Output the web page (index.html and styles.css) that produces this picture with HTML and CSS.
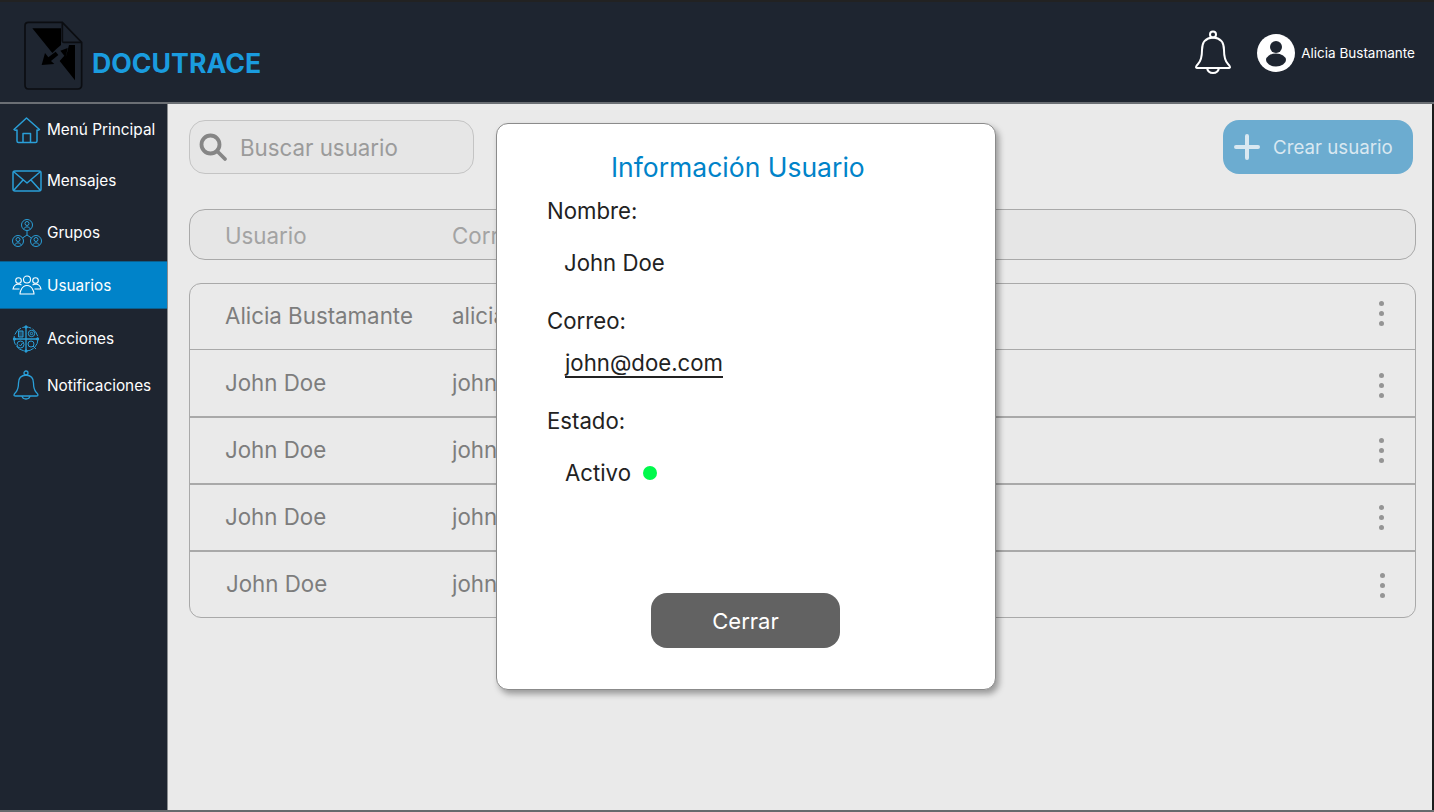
FILE: index.html
```html
<!DOCTYPE html>
<html lang="en">
<head>
  <meta charset="UTF-8">
  <meta name="viewport" content="width=device-width, initial-scale=1.0">
  <title>Docutrace - Usuarios</title>
  <link rel="stylesheet" href="styles.css">
</head>
<body>
  <div class="app">
    <header class="topbar">
      <div class="brand">
        <svg class="brand-icon" width="60" height="70" viewBox="15 8 180 210">
          <path d="M28 12H130L188 72V200Q188 212 176 212H28Q18 212 18 200V22Q18 12 28 12Z" fill="none" stroke="#0b0d11" stroke-width="5"/>
          <path d="M130 14V68Q130 72 134 72H186" fill="none" stroke="#0b0d11" stroke-width="5"/>
          <path d="M40 30H126V80L112 92L100 104Z" fill="#000"/>
          <path d="M68 140L78 104L88 117L110 100L118 110L96 128L106 137Z" fill="#000"/>
          <path d="M168 80V186L122 128L136 112L124 97L146 89L140 118L150 80Z" fill="#000"/>
        </svg>
        <span class="brand-name">DOCUTRACE</span>
      </div>
      <div class="topbar-right">
        <svg class="top-bell" width="38" height="46" viewBox="0 0 38 46" fill="none" stroke="#fff" stroke-width="2" stroke-linejoin="round">
          <circle cx="19" cy="4.5" r="3"/>
          <path d="M2 37Q2 36 4 34Q8 30 8 20Q8 8 19 7.5Q30 8 30 20Q30 30 34 34Q36 36 36 37Q36 38 34 38H4Q2 38 2 37Z"/>
          <path d="M13 38Q14 43 19 43Q24 43 25 38"/>
        </svg>
        <svg width="38" height="38" viewBox="0 0 38 38">
          <circle cx="19" cy="19" r="19" fill="#fff"/>
          <circle cx="19" cy="13" r="6" fill="#1e2530"/>
          <ellipse cx="19" cy="26" rx="10" ry="6.5" fill="#1e2530"/>
        </svg>
        <span class="top-user">Alicia Bustamante</span>
      </div>
    </header>

    <div class="body-row">
      <nav class="sidebar">
        <a class="nav-item nav-home">
          <svg class="nav-icon" width="30" height="28" viewBox="0 0 30 28" fill="none" stroke="#2a9fd8" stroke-width="1.5" stroke-linejoin="round">
            <path d="M2 13.5L14.5 2L27.5 13.5Q27 14.5 25 14V25Q25 26.5 23.5 26.5H6.5Q5 26.5 5 25V14Q3 14.5 2 13.5Z"/>
            <path d="M11 26V17.5H18.5V26"/>
          </svg>
          Menú Principal
        </a>
        <a class="nav-item nav-mail">
          <svg class="nav-icon" width="30" height="22" viewBox="0 0 30 22" fill="none" stroke="#2a9fd8" stroke-width="1.5" stroke-linejoin="round">
            <rect x="1" y="1" width="28" height="20" rx="2"/>
            <path d="M2 2L15 13L28 2M2 20L11 10M28 20L19 10"/>
          </svg>
          Mensajes
        </a>
        <a class="nav-item nav-groups">
          <svg class="nav-icon" width="30" height="30" viewBox="0 0 30 30" fill="none" stroke="#2a9fd8" stroke-width="1">
            <circle cx="15" cy="7" r="5.5"/>
            <circle cx="15" cy="5.5" r="2"/>
            <path d="M11.5 11Q15 6.5 18.5 11"/>
            <circle cx="6" cy="23" r="5.5"/>
            <circle cx="6" cy="21.5" r="2"/>
            <path d="M2.5 27Q6 22.5 9.500 27"/>
            <circle cx="24" cy="23" r="5.5"/>
            <circle cx="24" cy="21.5" r="2"/>
            <path d="M20.5 27Q24 22.5 27.5 27"/>
            <path d="M15 12.5V17L10.500 20M15 17L19.500 20"/>
          </svg>
          Grupos
        </a>
        <a class="nav-item nav-users">
          <svg class="nav-icon" width="30" height="20" viewBox="0 0 30 20" fill="none" stroke="#fff" stroke-width="1.1">
            <circle cx="15" cy="4.500" r="3.500"/>
            <path d="M8 19Q8 17 9 15Q11 10.500 15 10.500Q19 10.500 21 15Q22 17 22 19Z"/>
            <circle cx="6.500" cy="5.500" r="2.800"/>
            <path d="M9.500 10Q7.500 9 6 9Q2 9.500 1 14H7.500"/>
            <circle cx="23.500" cy="5.500" r="2.800"/>
            <path d="M20.500 10Q22.500 9 24 9Q28 9.500 29 14H22.500"/>
          </svg>
          Usuarios
        </a>
        <a class="nav-item nav-actions">
          <svg class="nav-icon" width="28" height="28" viewBox="0 0 28 28" fill="none" stroke="#2a9fd8" stroke-width="1">
            <circle cx="14" cy="14" r="12" stroke-dasharray="9 1.500"/>
            <path d="M14 2V26M2 14H26" stroke-width="1.300"/>
            <path d="M6.500 6H11V12H6.500Z" fill="#2a9fd8" fill-opacity=".35"/>
            <circle cx="19.500" cy="8.500" r="3.200"/>
            <circle cx="19.500" cy="8.500" r="1.200"/>
            <circle cx="8.500" cy="19.500" r="3.500"/>
            <path d="M7 19.500L8.500 21L10.500 18"/>
            <circle cx="19" cy="19" r="3"/>
            <path d="M21 21L24 24"/>
            <circle cx="2.500" cy="14" r="1.200" fill="#2a9fd8"/>
            <circle cx="25.500" cy="14" r="1.200" fill="#2a9fd8"/>
            <circle cx="14" cy="2" r="1.200" fill="#2a9fd8"/>
            <circle cx="14" cy="26" r="1.200" fill="#2a9fd8"/>
          </svg>
          Acciones
        </a>
        <a class="nav-item nav-alerts">
          <svg class="nav-icon" width="26" height="31" viewBox="0 0 26 31" fill="none" stroke="#2a9fd8" stroke-width="1.300" stroke-linejoin="round">
            <circle cx="13" cy="3" r="2"/>
            <path d="M1 25Q1 24 3 22Q5.500 19 5.500 13Q5.500 5.500 13 5Q20.500 5.500 20.500 13Q20.500 19 23 22Q25 24 25 25Q25 26 23.500 26H2.500Q1 26 1 25Z"/>
            <path d="M9 26Q9.500 29 13 29Q16.500 29 17 26"/>
          </svg>
          Notificaciones
        </a>
      </nav>

      <main class="content">
        <div class="toolbar">
          <div class="search">
            <svg width="30" height="30" viewBox="0 0 30 30" fill="none" stroke="#868686" stroke-width="3.800">
              <circle cx="12.500" cy="12.500" r="9"/>
              <path d="M19 19L27 27" stroke-linecap="round"/>
            </svg>
            <span>Buscar usuario</span>
          </div>
          <button class="create-btn">
            <svg width="26" height="26" viewBox="0 0 26 26" stroke="#d9e8f1" stroke-width="4" stroke-linecap="round">
              <path d="M13 2V24M2 13H24"/>
            </svg>
            Crear usuario
          </button>
        </div>

        <div class="table-head">
          <span class="col-user">Usuario</span>
          <span class="col-mail">Correo</span>
        </div>

        <div class="table-body">
          <div class="row row-first">
            <span class="col-user">Alicia Bustamante</span>
            <span class="col-mail">alicia@docutrace.com</span>
            <span class="dots"><i></i><i></i><i></i></span>
          </div>
          <div class="row row-thin">
            <span class="col-user">John Doe</span>
            <span class="col-mail">john@doe.com</span>
            <span class="dots"><i></i><i></i><i></i></span>
          </div>
          <div class="row">
            <span class="col-user">John Doe</span>
            <span class="col-mail">john@doe.com</span>
            <span class="dots"><i></i><i></i><i></i></span>
          </div>
          <div class="row">
            <span class="col-user">John Doe</span>
            <span class="col-mail">john@doe.com</span>
            <span class="dots"><i></i><i></i><i></i></span>
          </div>
          <div class="row row-last">
            <span class="col-user">John Doe</span>
            <span class="col-mail">john@doe.com</span>
            <span class="dots"><i></i><i></i><i></i></span>
          </div>
        </div>
      </main>
    </div>

    <section class="modal">
      <h2 class="modal-title">Información Usuario</h2>
      <div class="modal-label">Nombre:</div>
      <div class="modal-value value-name">John Doe</div>
      <div class="modal-label label-mail">Correo:</div>
      <div class="modal-value value-mail"><span>john@doe.com</span></div>
      <div class="modal-label label-state">Estado:</div>
      <div class="modal-value value-state">Activo <i class="status-dot"></i></div>
      <button class="close-btn">Cerrar</button>
    </section>
  </div>
</body>
</html>
```

FILE: styles.css
```css
* {
  box-sizing: border-box;
}
html, body {
  margin: 0;
  height: 100%;
  overflow: hidden;
}
body {
  font-family: Inter, "Liberation Sans", sans-serif;
  background-color: #1e2530;
}
.app {
  position: relative;
  display: flex;
  flex-direction: column;
  width: 1434px;
  height: 812px;
  border-bottom: 2px solid #66696c;
}

/* top bar */
.topbar {
  display: flex;
  flex: none;
  align-items: center;
  justify-content: space-between;
  height: 104px;
  padding: 2px 19px 0 24px;
  background-color: #1e2530;
  border-top: 2px solid #222;
  border-bottom: 2px solid #6b6f74;
}
.brand {
  display: flex;
  align-items: center;
  gap: 8px;
  margin-top: 6px;
}
.brand-name {
  margin-top: 14px;
  color: #1a9cdf;
  font-size: 26.700px;
  font-weight: 700;
  line-height: 32px;
}
.topbar-right {
  display: flex;
  align-items: center;
  color: #fff;
}
.top-bell {
  margin-right: 25px;
}
.top-user {
  margin-left: 6px;
  font-size: 13.500px;
}

/* sidebar */
.body-row {
  display: flex;
  flex: 1;
  min-height: 0;
}
.sidebar {
  width: 168px;
  padding-top: 2px;
  background-color: #1e2530;
  border-right: 1px solid #8a8d90;
}
.nav-item {
  display: flex;
  align-items: center;
  height: 47px;
  padding-left: 12px;
  color: #fff;
  font-size: 15.350px;
  white-space: nowrap;
}
.nav-icon {
  flex: none;
  margin-right: 5px;
}
.nav-mail {
  margin-top: 4px;
}
.nav-groups {
  margin-top: 5px;
}
.nav-users {
  height: 48px;
  margin-top: 5px;
  background-color: #0083c9;
  border-top: 1px solid #0b5f8d;
  border-bottom: 1px solid #0b5f8d;
}
.nav-actions {
  margin-top: 6px;
}
.nav-actions .nav-icon {
  margin-right: 7px;
}
.nav-alerts .nav-icon {
  margin: 0 8px 0 1px;
}

/* main area */
.content {
  flex: 1;
  padding: 16px 16px 0 21px;
  background-color: #eaeaea;
  border-right: 2px solid #1c1c1c;
  font-size: 22.300px;
}
.toolbar {
  display: flex;
  justify-content: space-between;
  height: 54px;
}
.search {
  display: flex;
  align-items: center;
  gap: 12px;
  width: 285px;
  padding-left: 8px;
  background-color: #e6e6e6;
  border: 1px solid #c4c4c4;
  border-radius: 16px;
  color: #9b9b9b;
}
.create-btn {
  display: flex;
  align-items: center;
  gap: 13px;
  width: 190px;
  margin-right: 3px;
  padding: 0 0 0 11px;
  background-color: #6cacd0;
  border: none;
  border-radius: 16px;
  color: #d9e8f1;
  font-family: inherit;
  font-size: 18.700px;
}
.table-head {
  display: flex;
  align-items: center;
  height: 51px;
  margin-top: 35px;
  padding: 1px 0 0 35px;
  background-color: #e6e6e6;
  border: 1px solid #a9a9a9;
  border-radius: 16px;
  color: #a3a3a3;
}
.table-body {
  margin-top: 23px;
  border: 1px solid #a9a9a9;
  border-radius: 12px;
}
.row {
  display: flex;
  align-items: center;
  height: 67px;
  padding: 0 0 2px 35px;
  border-top: 2px solid #a9a9a9;
  color: #7d7d7d;
}
.row-first {
  height: 65px;
  border-top: none;
}
.row-thin {
  border-top-width: 1px;
}
.row-last {
  padding-left: 36px;
}
.col-user {
  width: 227px;
}
.row-last .col-user {
  width: 226px;
}
.dots {
  display: flex;
  flex-direction: column;
  gap: 5px;
  margin: 2px 31px 0 auto;
}
.row-first .dots {
  margin-top: 0;
  margin-bottom: 4px;
}
.row-thin .dots {
  margin-top: 7px;
}
.row-last .dots {
  margin: 4px 30px 0 auto;
}
.dots i {
  width: 5px;
  height: 5px;
  background-color: #959595;
  border-radius: 50%;
}

/* modal */
.modal {
  position: absolute;
  top: 123px;
  left: 496px;
  width: 500px;
  height: 567px;
  padding: 27px 0 0 50px;
  background-color: #fff;
  border: 1px solid #8b8b8b;
  border-radius: 12px;
  box-shadow: 3px 4px 6px rgba(0, 0, 0, 0.35);
  color: #222;
  font-size: 22.200px;
}
.modal-title {
  margin: 0 0 14px;
  padding-left: 64px;
  color: #0083c9;
  font-size: 26.500px;
  font-weight: 400;
  line-height: 32px;
}
.modal-label, .modal-value {
  line-height: 27px;
}
.modal-value {
  padding-left: 17px;
}
.value-name {
  margin-top: 25px;
}
.label-mail {
  margin-top: 31px;
}
.value-mail {
  margin-top: 15px;
  padding-left: 18px;
}
.value-mail span {
  display: inline-block;
  border-bottom: 2px solid #222;
}
.label-state {
  margin-top: 29px;
}
.value-state {
  display: flex;
  align-items: center;
  gap: 12px;
  margin-top: 25px;
  padding-left: 18px;
}
.status-dot {
  width: 14px;
  height: 14px;
  background-color: #00f94c;
  border-radius: 50%;
}
.close-btn {
  display: block;
  width: 189px;
  height: 55px;
  margin: 107px 0 0 104px;
  background-color: #626262;
  border: none;
  border-radius: 16px;
  color: #fff;
  font-family: inherit;
  font-size: 22px;
}
```
